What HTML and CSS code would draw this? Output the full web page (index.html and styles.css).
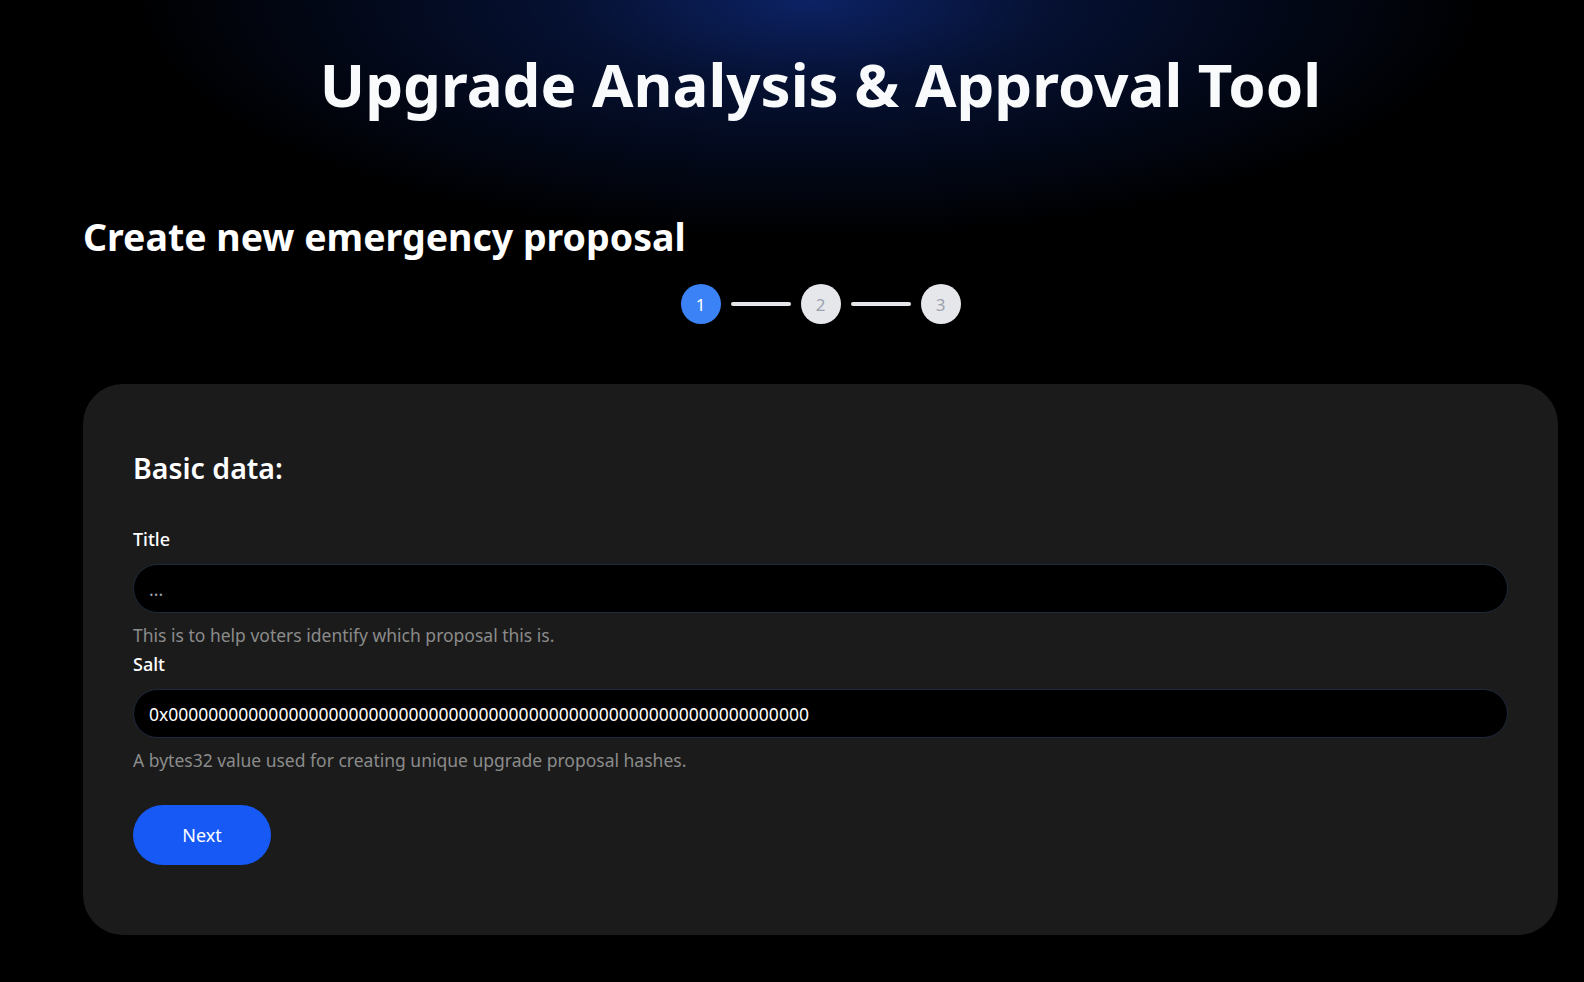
FILE: index.html
```html
<!DOCTYPE html>
<html lang="en">
<head>
<meta charset="utf-8">
<title>Upgrade Analysis &amp; Approval Tool</title>
<link rel="stylesheet" href="styles.css">
</head>
<body>
<div class="page">
  <header class="app-header">
    <h1 class="app-title">Upgrade Analysis &amp; Approval Tool</h1>
  </header>
  <main class="main">
    <h2 class="page-title">Create new emergency proposal</h2>
    <div class="stepper">
      <span class="step step-active">1</span>
      <span class="step-line"></span>
      <span class="step">2</span>
      <span class="step-line"></span>
      <span class="step">3</span>
    </div>
    <section class="card">
      <h3 class="card-title">Basic data:</h3>
      <div class="field">
        <label class="field-label" for="title">Title</label>
        <input class="field-input" id="title" type="text" placeholder="...">
        <p class="field-help">This is to help voters identify which proposal this is.</p>
      </div>
      <div class="field">
        <label class="field-label" for="salt">Salt</label>
        <input class="field-input field-input-salt" id="salt" type="text" value="0x0000000000000000000000000000000000000000000000000000000000000000">
        <p class="field-help">A bytes32 value used for creating unique upgrade proposal hashes.</p>
      </div>
      <button class="btn-next" type="button">Next</button>
    </section>
  </main>
</div>
</body>
</html>
```

FILE: styles.css
```css
* {
  box-sizing: border-box;
}

html, body {
  margin: 0;
  padding: 0;
}

body {
  min-height: 982px;
  background-color: #000;
  background-image: radial-gradient(ellipse 680px 240px at 810px 0px, rgba(12, 34, 100, 1) 0%, rgba(8, 24, 72, 0.7) 35%, rgba(0, 0, 0, 0) 100%);
  background-repeat: no-repeat;
  font-family: "Noto Sans", "Open Sans", sans-serif;
  color: #f8fafc;
}

.page {
  padding: 0 26px 0 83px;
}

.app-header {
  padding-top: 48px;
}

.app-title {
  margin: 0;
  text-align: center;
  font-size: 60px;
  line-height: 72px;
  font-weight: 700;
  color: #f8fafc;
}

.main {
  padding-top: 95px;
}

.page-title {
  margin: 0;
  font-size: 37.5px;
  line-height: 43px;
  font-weight: 700;
  color: #fff;
}

.stepper {
  display: flex;
  justify-content: center;
  align-items: center;
  gap: 10px;
  margin-top: 26px;
}

.step {
  width: 40px;
  height: 40px;
  border-radius: 50%;
  background: #e5e7eb;
  color: #9ca3af;
  display: flex;
  align-items: center;
  justify-content: center;
  font-size: 17px;
}

.step-active {
  background: #3b82f6;
  color: #fff;
}

.step-line {
  width: 60px;
  height: 4px;
  border-radius: 2px;
  background: #e5e7eb;
}

.card {
  margin-top: 60px;
  background: #1b1b1b;
  border-radius: 40px;
  padding: 66px 50px 70px;
}

.card-title {
  margin: 0 0 40px;
  font-size: 28.5px;
  line-height: 36px;
  font-weight: 600;
  color: #fff;
}

.field {
  display: flex;
  flex-direction: column;
}

.field-label {
  font-size: 18px;
  line-height: 27px;
  font-weight: 500;
  color: #fff;
  margin-bottom: 11px;
}

.field-input {
  height: 49px;
  width: 100%;
  border-radius: 9999px;
  border: 1px solid #1e2a3d;
  background: #000;
  color: #fff;
  padding: 0 15px;
  font-family: "Noto Sans", "Open Sans", sans-serif;
  font-size: 17.5px;
  outline: none;
}

.field-input::placeholder {
  color: #9ca3af;
}

.field-help {
  margin: 9px 0 2px;
  font-size: 17.5px;
  line-height: 27px;
  color: #8b8b8b;
}

.btn-next {
  margin-top: 29px;
  width: 138px;
  height: 60px;
  border: none;
  border-radius: 9999px;
  background: #1659f5;
  color: #fff;
  font-family: "Noto Sans", "Open Sans", sans-serif;
  font-size: 18px;
  cursor: pointer;
}
```
